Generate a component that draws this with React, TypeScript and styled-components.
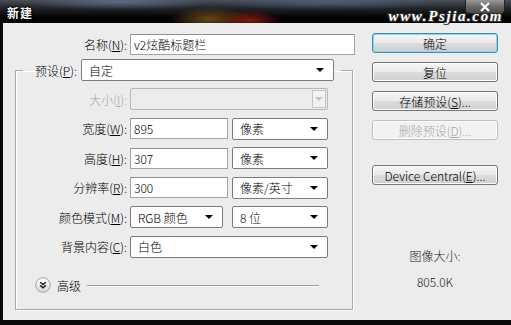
import React from 'react';
import styled, { createGlobalStyle } from 'styled-components';

const GlobalStyle = createGlobalStyle`
  html, body {
    margin: 0;
    padding: 0;
    background: #000;
  }
  body {
    font-family: "Noto Sans CJK SC", "Liberation Sans", sans-serif;
    font-size: 12px;
    font-weight: 300;
    color: #000;
  }
`;

const Window = styled.div`
  width: 511px;
  height: 325px;
  display: flex;
  flex-direction: column;
  background: #0a0a0a;
  overflow: hidden;
`;

const TitleBar = styled.div`
  position: relative;
  height: 23px;
  flex: 0 0 23px;
  background:
    radial-gradient(ellipse 30px 10px at 250px 20px, rgba(160, 30, 20, 0.8), transparent),
    radial-gradient(ellipse 40px 12px at 210px 19px, rgba(150, 100, 30, 0.7), transparent),
    radial-gradient(ellipse 90px 8px at 120px 2px, rgba(110, 130, 170, 0.6), transparent),
    radial-gradient(ellipse 120px 8px at 330px 2px, rgba(90, 110, 150, 0.55), transparent),
    linear-gradient(#4a4f58 0%, #22252a 35%, #060606 70%, #020202 100%);
  display: flex;
  align-items: flex-start;
`;

const Title = styled.div`
  padding: 4px 0 0 7px;
  color: #fff;
  font-size: 12px;
  font-weight: bold;
  letter-spacing: 1px;
  text-shadow: 0 0 2px #000, 0 0 3px #000, 1px 1px 1px #000;
`;

const CloseButton = styled.div`
  position: absolute;
  right: 6px;
  top: 0;
  width: 40px;
  height: 14px;
  border: 1px solid #222;
  border-top: none;
  border-radius: 0 0 4px 4px;
  background: linear-gradient(#9a9a9a, #6a6a6a 50%, #4a4a4a);
  display: flex;
  align-items: center;
  justify-content: center;
  box-sizing: border-box;
`;

const Watermark = styled.div`
  position: absolute;
  right: 8px;
  top: 10px;
  font-family: "Liberation Serif", serif;
  font-style: italic;
  font-weight: bold;
  font-size: 15px;
  color: #fff;
  letter-spacing: 1.6px;
  text-shadow: -1px -1px 0 #333, 1px -1px 0 #333, -1px 1px 0 #333, 1px 1px 0 #333;
  line-height: 13px;
`;

const Body = styled.div`
  flex: 1;
  display: flex;
  background: #ececec;
  margin: 0 0 5px 3px;
  padding-top: 10px;
`;

const LeftColumn = styled.div`
  width: 352px;
  display: flex;
  flex-direction: column;
`;

const Row = styled.div`
  display: flex;
  align-items: center;
  gap: 3px;
  height: 22px;
`;

const Label = styled.label<{ $width: number; $disabled?: boolean }>`
  width: ${(p) => p.$width}px;
  text-align: right;
  white-space: nowrap;
  color: ${(p) => (p.$disabled ? '#a6a6a6' : '#000')};
  u {
    text-decoration: underline;
    text-underline-offset: 1px;
  }
`;

const TextInput = styled.div<{ $width: number }>`
  width: ${(p) => p.$width}px;
  height: 21px;
  box-sizing: border-box;
  border: 1px solid #a3a3a3;
  border-top-color: #8f8f8f;
  background: #fff;
  padding: 0 3px;
  display: flex;
  align-items: center;
  white-space: nowrap;
`;

const Select = styled.div<{ $width: number; $disabled?: boolean }>`
  width: ${(p) => p.$width}px;
  height: 22px;
  box-sizing: border-box;
  border: 1px solid ${(p) => (p.$disabled ? '#b8b8b8' : '#7c7c7c')};
  border-radius: 2px;
  background: ${(p) => (p.$disabled ? '#ececec' : '#fff')};
  padding: 0 5px 0 7px;
  display: flex;
  align-items: center;
  justify-content: space-between;
  white-space: nowrap;
`;

const Arrow = styled.span`
  width: 0;
  height: 0;
  border-left: 4px solid transparent;
  border-right: 4px solid transparent;
  border-top: 4px solid #000;
  margin-right: 4px;
`;

const DisabledDrop = styled.span`
  width: 14px;
  height: 18px;
  margin-right: -4px;
  box-sizing: border-box;
  border: 1px solid #c4c4c4;
  background: #f2f2f2;
  display: flex;
  align-items: center;
  justify-content: center;
  &::after {
    content: '';
    border-left: 4px solid transparent;
    border-right: 4px solid transparent;
    border-top: 4px solid #c4c4c4;
  }
`;

const Group = styled.fieldset`
  margin: 4px 0 0 12px;
  width: 338px;
  height: 251px;
  box-sizing: border-box;
  padding: 0;
  border: 1px solid #a9a9a9;
  box-shadow: inset 1px 1px 0 #fff, 1px 1px 0 #fff;
  display: flex;
  flex-direction: column;
`;

const Legend = styled.legend`
  margin-left: 7px;
  padding: 0 7px 0 8px;
  display: flex;
  align-items: center;
  gap: 4px;
  height: 22px;
`;

const GroupRows = styled.div`
  display: flex;
  flex-direction: column;
  gap: 7.6px;
  padding-top: 7px;
`;

const Advanced = styled.div`
  display: flex;
  align-items: center;
  margin: 19px 0 0 19px;
  gap: 6px;
`;

const Rule = styled.div`
  width: 232px;
  height: 1px;
  background: #9a9a9a;
  box-shadow: 0 1px 0 #fff;
`;

const RightColumn = styled.div`
  width: 126px;
  margin-left: 17px;
  display: flex;
  flex-direction: column;
  align-items: center;
`;

const Button = styled.div<{ $primary?: boolean; $disabled?: boolean; $gap?: number }>`
  width: 126px;
  height: 20px;
  margin-top: ${(p) => p.$gap ?? 0}px;
  box-sizing: border-box;
  border: 1px solid ${(p) => (p.$primary ? '#3c8fb0' : p.$disabled ? '#c0c0c0' : '#747474')};
  border-radius: 3px;
  background: ${(p) =>
    p.$disabled
      ? '#f2f2f2'
      : 'linear-gradient(#f6f6f6 0%, #e9e9e9 50%, #dcdcdc 51%, #cfcfcf 100%)'};
  box-shadow: ${(p) => (p.$primary ? 'inset 0 0 0 1px #8fd3ec' : 'inset 0 0 0 1px #fbfbfb')};
  color: ${(p) => (p.$disabled ? '#a6a6a6' : '#000')};
  display: flex;
  align-items: center;
  justify-content: center;
  white-space: nowrap;
  u {
    text-underline-offset: 1px;
  }
`;

const SizeInfo = styled.div`
  margin-top: 62px;
  display: flex;
  flex-direction: column;
  align-items: center;
  gap: 9px;
  color: #222;
`;

const CircleIcon = () => (
  <svg width="16" height="16" viewBox="0 0 16 16">
    <defs>
      <linearGradient id="cg" x1="0" y1="0" x2="0" y2="1">
        <stop offset="0" stopColor="#ffffff" />
        <stop offset="1" stopColor="#d6d6d6" />
      </linearGradient>
    </defs>
    <circle cx="8" cy="8" r="7.3" fill="url(#cg)" stroke="#9c9c9c" strokeWidth="0.9" />
    <path d="M5.2 5.2 L8 7.6 L10.8 5.2 M5.2 8.4 L8 10.8 L10.8 8.4" fill="none" stroke="#222" strokeWidth="1.5" />
  </svg>
);

const App = () => {
  return (
    <>
      <GlobalStyle />
      <Window>
        <TitleBar>
          <Title>新建</Title>
          <CloseButton>
            <svg width="12" height="10" viewBox="0 0 12 10">
              <path d="M2 1 L10 9 M10 1 L2 9" stroke="#fff" strokeWidth="2.2" />
            </svg>
          </CloseButton>
          <Watermark>www.Psjia.com</Watermark>
        </TitleBar>
        <Body>
          <LeftColumn>
            <Row>
              <Label $width={124}>
                名称(<u>N</u>):
              </Label>
              <TextInput $width={225}>v2炫酷标题栏</TextInput>
            </Row>
            <Group>
              <Legend>
                <Label $width={46}>
                  预设(<u>P</u>):
                </Label>
                <Select $width={253}>
                  自定
                  <Arrow />
                </Select>
              </Legend>
              <GroupRows>
                <Row>
                  <Label $width={111} $disabled>
                    大小(<u>I</u>):
                  </Label>
                  <Select $width={198} $disabled>
                    <span />
                    <DisabledDrop />
                  </Select>
                </Row>
                <Row>
                  <Label $width={111}>
                    宽度(<u>W</u>):
                  </Label>
                  <TextInput $width={98}>895</TextInput>
                  <Select $width={96} style={{ marginLeft: 1 }}>
                    像素
                    <Arrow />
                  </Select>
                </Row>
                <Row>
                  <Label $width={111}>
                    高度(<u>H</u>):
                  </Label>
                  <TextInput $width={98}>307</TextInput>
                  <Select $width={96} style={{ marginLeft: 1 }}>
                    像素
                    <Arrow />
                  </Select>
                </Row>
                <Row>
                  <Label $width={111}>
                    分辨率(<u>R</u>):
                  </Label>
                  <TextInput $width={98}>300</TextInput>
                  <Select $width={96} style={{ marginLeft: 1 }}>
                    像素/英寸
                    <Arrow />
                  </Select>
                </Row>
                <Row>
                  <Label $width={111}>
                    颜色模式(<u>M</u>):
                  </Label>
                  <Select $width={93}>
                    RGB 颜色
                    <Arrow />
                  </Select>
                  <Select $width={96} style={{ marginLeft: 6 }}>
                    8 位
                    <Arrow />
                  </Select>
                </Row>
                <Row>
                  <Label $width={111}>
                    背景内容(<u>C</u>):
                  </Label>
                  <Select $width={198}>
                    白色
                    <Arrow />
                  </Select>
                </Row>
              </GroupRows>
              <Advanced>
                <CircleIcon />
                <span>高级</span>
                <Rule />
              </Advanced>
            </Group>
          </LeftColumn>
          <RightColumn>
            <Button $primary>确定</Button>
            <Button $gap={9}>复位</Button>
            <Button $gap={9}>
              存储预设(<u>S</u>)...
            </Button>
            <Button $gap={9} $disabled>
              删除预设(<u>D</u>)...
            </Button>
            <Button $gap={25}>
              Device Central(<u>E</u>)...
            </Button>
            <SizeInfo>
              <span>图像大小:</span>
              <span>805.0K</span>
            </SizeInfo>
          </RightColumn>
        </Body>
      </Window>
    </>
  );
};

export default App;
